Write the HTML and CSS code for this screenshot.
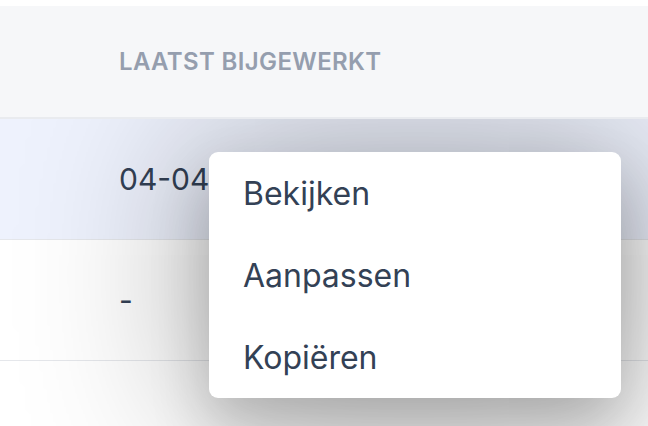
FILE: index.html
```html
<!DOCTYPE html>
<html lang="nl">
<head>
<meta charset="utf-8">
<title>Tabel</title>
<link rel="stylesheet" href="styles.css">
</head>
<body>
<div class="page">
  <div class="table">
    <div class="thead">
      <div class="head-row">
        <div class="th">Laatst bijgewerkt</div>
      </div>
    </div>
    <div class="row row-active">
      <div class="td">04-04-2024</div>
    </div>
    <div class="row">
      <div class="td">-</div>
    </div>
  </div>
  <ul class="menu">
    <li class="menu-item">Bekijken</li>
    <li class="menu-item">Aanpassen</li>
    <li class="menu-item">Kopiëren</li>
  </ul>
</div>
</body>
</html>
```

FILE: styles.css
```css
html, body {
  margin: 0;
  padding: 0;
  background: #ffffff;
}
body {
  font-family: Inter, "Noto Sans", "Liberation Sans", sans-serif;
  width: 648px;
  height: 426px;
  overflow: hidden;
}
.page {
  position: relative;
  width: 648px;
  height: 426px;
}
.table {
  display: flex;
  flex-direction: column;
}
.thead {
  position: relative;
  z-index: 2;
  background: #ffffff;
  padding-top: 6px;
}
.head-row {
  height: 111px;
  background: #f6f7f9;
  border-bottom: 2px solid #e9ebef;
  display: flex;
  align-items: center;
  padding-left: 119px;
}
.th {
  font-size: 24px;
  font-weight: 600;
  letter-spacing: 0.015em;
  text-transform: uppercase;
  color: #959eae;
}
.row {
  height: 120px;
  border-bottom: 1px solid #e5e7eb;
  display: flex;
  align-items: center;
  padding-left: 119px;
  background: #ffffff;
}
.row-active {
  background: #eef2fd;
}
.td {
  font-size: 30px;
  color: #334155;
  white-space: nowrap;
}
.menu {
  position: absolute;
  z-index: 1;
  left: 209px;
  top: 152px;
  width: 412px;
  margin: 0;
  padding: 0;
  list-style: none;
  background: #ffffff;
  border-radius: 9px;
  box-shadow: 0 0 170px 19px rgba(0, 0, 0, 0.3), 0 30px 60px rgba(0, 0, 0, 0.2);
  display: flex;
  flex-direction: column;
}
.menu-item {
  height: 82px;
  display: flex;
  align-items: center;
  padding-left: 34px;
  font-size: 32px;
  color: #334155;
}
```
